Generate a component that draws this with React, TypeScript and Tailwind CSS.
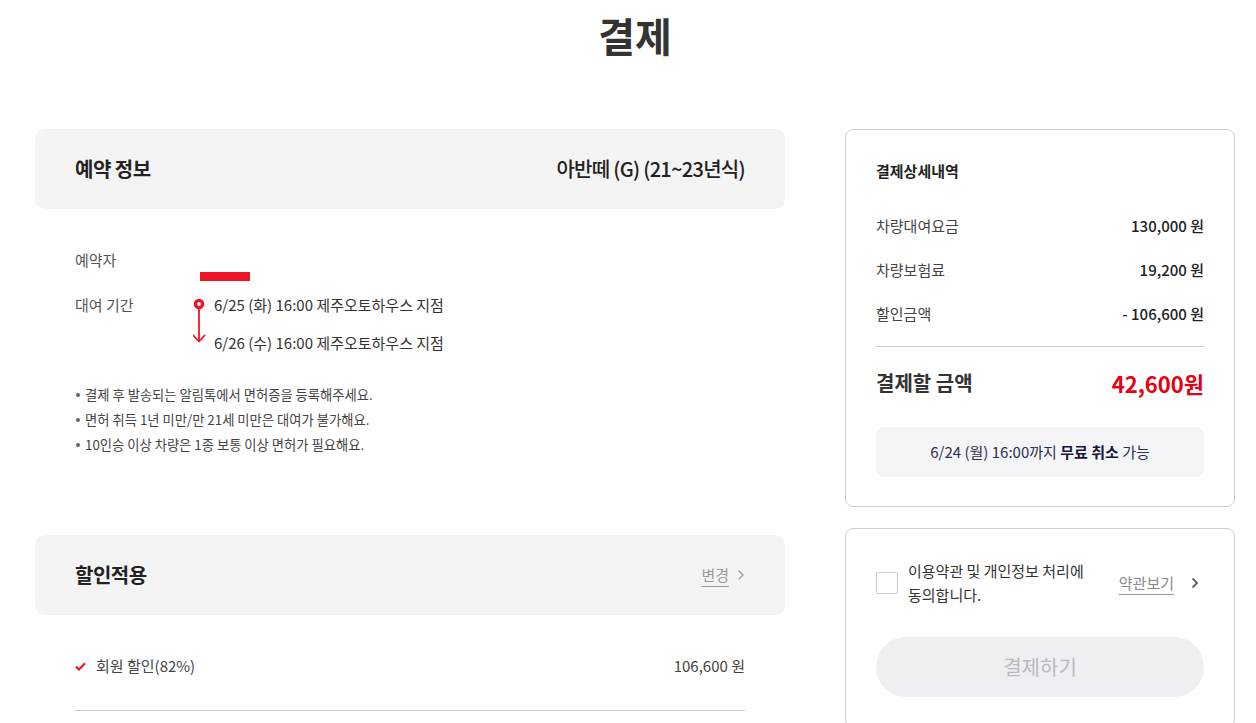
const font = { fontFamily: '"Noto Sans CJK KR", "Noto Sans", sans-serif' };

const notices = [
	"결제 후 발송되는 알림톡에서 면허증을 등록해주세요.",
	"면허 취득 1년 미만/만 21세 미만은 대여가 불가해요.",
	"10인승 이상 차량은 1종 보통 이상 면허가 필요해요.",
];

const priceRows = [
	{ label: "차량대여요금", value: "130,000 원" },
	{ label: "차량보험료", value: "19,200 원" },
	{ label: "할인금액", value: "- 106,600 원" },
];

const Timeline = () => (
	<svg width="13" height="48" viewBox="0 0 13 48" className="shrink-0">
		<line x1="6" y1="12" x2="6" y2="46.5" stroke="#ee1529" strokeWidth="1.8" />
		<circle cx="6" cy="9" r="3.6" fill="white" stroke="#ee1529" strokeWidth="3.4" />
		<path d="M0.5 40.5 L6 46.5 L11.5 40.5" fill="none" stroke="#ee1529" strokeWidth="1.8" strokeLinecap="round" strokeLinejoin="round" />
	</svg>
);

const Chevron = ({ color, width }: { color: string; width: number }) => (
	<svg width="8" height="12" viewBox="0 0 8 12" className="shrink-0">
		<path d="M1.5 1.5 L6 6 L1.5 10.5" fill="none" stroke={color} strokeWidth={width} />
	</svg>
);

const App = () => {
	return (
		<div className="min-h-screen bg-white text-[#222]" style={font}>
			<div className="w-[1200px] ml-[35px]">
				{/* Title */}
				<h1 className="text-center text-[40px] leading-[60px] font-bold text-[#333] pt-[5px]">결제</h1>

				<div className="flex gap-[60px] mt-[64px]">
					{/* Left column */}
					<div className="w-[750px] shrink-0">
						<div className="h-[80px] rounded-[10px] bg-[#f4f4f4] px-[40px] flex items-center justify-between">
							<span className="text-[20px] font-bold tracking-[-0.5px]">예약 정보</span>
							<span className="text-[20px] font-medium tracking-[-0.7px]">아반떼 (G) (21~23년식)</span>
						</div>

						<div className="px-[40px] pt-[40px]">
							<div className="flex">
								<div className="w-[118px] text-[15px] leading-[22px] text-[#555]">예약자</div>
								<div className="pt-[23px]">
									<div className="ml-[7px] h-[9px] w-[50px] bg-[#ee1529]" />
								</div>
							</div>
							<div className="flex mt-[13px]">
								<div className="w-[118px] text-[15px] leading-[22px] text-[#555]">대여 기간</div>
								<div className="flex gap-[8px]">
									<div className="pt-[1px]">
										<Timeline />
									</div>
									<div className="flex flex-col gap-[16px] text-[15px] leading-[22px] text-[#333]">
										<span>6/25 (화) 16:00 제주오토하우스 지점</span>
										<span>6/26 (수) 16:00 제주오토하우스 지점</span>
									</div>
								</div>
							</div>

							<ul className="mt-[28px] text-[13.3px] leading-[25px] text-[#444]">
								{notices.map((n) => (
									<li key={n} className="flex items-center">
										<span className="w-[4px] h-[4px] rounded-full bg-[#666] ml-[1px] mr-[5px]" />
										<span>{n}</span>
									</li>
								))}
							</ul>
						</div>

						<div className="mt-[78px] h-[80px] rounded-[10px] bg-[#f4f4f4] px-[40px] flex items-center justify-between">
							<span className="text-[20px] font-bold tracking-[-0.5px]">할인적용</span>
							<span className="flex items-center gap-[8px] text-[15px] text-[#999]">
								<span className="underline underline-offset-[5px] decoration-[#999]">변경</span>
								<Chevron color="#999" width={1.2} />
							</span>
						</div>

						<div className="mx-[40px] mt-[40px] pb-[33px] border-b border-[#ccc] flex items-center justify-between text-[15px] leading-[22px] text-[#444]">
							<span className="flex items-center gap-[10px]">
								<svg width="11" height="9" viewBox="0 0 11 9">
									<path d="M1 4.6 L4 7.5 L10 1.2" fill="none" stroke="#ee1529" strokeWidth="2.2" />
								</svg>
								회원 할인(82%)
							</span>
							<span>106,600 원</span>
						</div>
					</div>

					{/* Right column */}
					<div className="w-[390px] shrink-0">
						<div className="border border-[#cfcfcf] rounded-[8px] px-[30px] pt-[30px] pb-[29px]">
							<div className="text-[15px] leading-[22px] font-bold text-[#222]">결제상세내역</div>
							<div className="mt-[33px] flex flex-col gap-[22px]">
								{priceRows.map((r) => (
									<div key={r.label} className="flex justify-between text-[15px] leading-[22px]">
										<span className="text-[#444]">{r.label}</span>
										<span className="font-medium text-[#222]">{r.value}</span>
									</div>
								))}
							</div>
							<div className="mt-[21px] border-t border-[#ccc]" />
							<div className="mt-[21px] flex items-center justify-between">
								<span className="text-[20px] leading-[30px] font-bold text-[#333]">결제할 금액</span>
								<span className="text-[22px] leading-[30px] font-bold text-[#e60012]">42,600원</span>
							</div>
							<div className="mt-[29px] h-[50px] rounded-[8px] bg-[#f5f5f8] flex items-center justify-center text-[15px] text-[#2b2f55]">
								6/24 (월) 16:00까지&nbsp;<b className="font-bold text-[#14183c]">무료 취소</b>&nbsp;가능
							</div>
						</div>

						<div className="mt-[21px] border border-[#cfcfcf] rounded-[8px] px-[30px] pt-[30px] pb-[30px]">
							<div className="flex items-center">
								<div className="w-[22px] h-[22px] border border-[#ccc] rounded-[2px] shrink-0" />
								<div className="ml-[10px] text-[15px] leading-[24px] text-[#333] w-[200px]">
									이용약관 및 개인정보 처리에
									<br />
									동의합니다.
								</div>
								<div className="ml-auto mr-[5px] flex items-center gap-[17px]">
									<span className="text-[15px] text-[#888] underline underline-offset-[5px] decoration-[#999]">약관보기</span>
									<Chevron color="#666" width={2} />
								</div>
							</div>
							<button className="mt-[30px] w-full h-[60px] rounded-full bg-[#efeff3] text-[20px] text-[#b9b9be]">
								결제하기
							</button>
						</div>
					</div>
				</div>
			</div>
		</div>
	);
};

export default App;
